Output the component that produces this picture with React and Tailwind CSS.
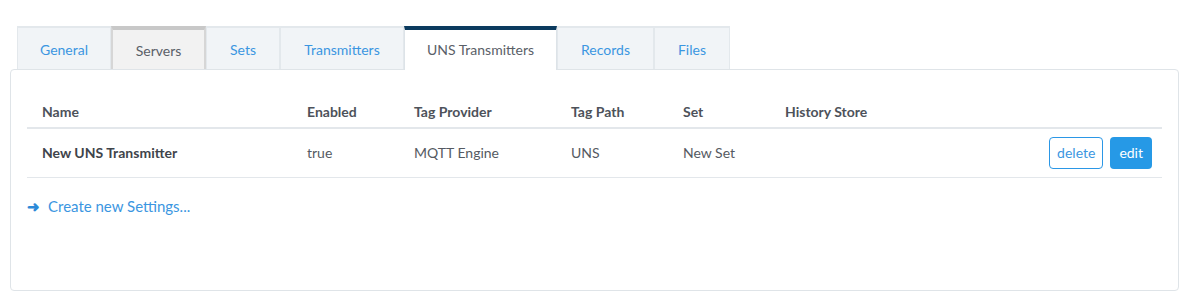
import React from "react";

const tabs = [
  { label: "General", w: "w-[94px]" },
  { label: "Servers", w: "w-[95px]", kind: "hover" },
  { label: "Sets", w: "w-[74px]" },
  { label: "Transmitters", w: "w-[124px]" },
  { label: "UNS Transmitters", w: "w-[153px]", kind: "active" },
  { label: "Records", w: "w-[97px]" },
  { label: "Files", w: "w-[76px]" },
];

function Tab({ t }) {
  if (t.kind === "active") {
    return (
      <div className={`${t.w} relative z-10 -mb-px h-[44px] pb-[2px] bg-white border-x border-[#dde3e8] border-t-[4px] border-t-[#0b3a5e] flex items-center justify-center text-[#5a6068]`}>
        {t.label}
      </div>
    );
  }
  if (t.kind === "hover") {
    return (
      <div className={`${t.w} h-[43px] pt-[2px] bg-[#f2f2f2] border-x-2 border-[#d6d6d6] border-t-[4px] border-t-[#c8c8c8] flex items-center justify-center text-[#5a6068]`}>
        {t.label}
      </div>
    );
  }
  return (
    <div className={`${t.w} h-[43px] pt-[2px] bg-[#f1f4f7] border-x border-t-2 border-[#e3e8ec] flex items-center justify-center text-[#3b96e1]`}>
      {t.label}
    </div>
  );
}

export default function App() {
  return (
    <div
      className="w-[1202px] h-[302px] bg-white pt-[26px] pl-[10px] text-[14px]"
      style={{ fontFamily: '"Source Sans Pro", Lato, "Open Sans", sans-serif' }}
    >
      <div className="flex pl-[7px] items-end">
        {tabs.map((t) => (
          <Tab key={t.label} t={t} />
        ))}
      </div>
      <div className="w-[1169px] h-[222px] border border-[#dfe4e8] rounded-[4px] px-[16px] pt-[25px]">
        <table className="w-full border-collapse table-fixed">
          <thead>
            <tr className="border-b-2 border-[#e3e7eb] text-left text-[#4d525a] font-bold">
              <th className="h-[33px] pl-[15px] w-[280px] font-bold">Name</th>
              <th className="w-[107px] font-bold">Enabled</th>
              <th className="w-[157px] font-bold">Tag Provider</th>
              <th className="w-[112px] font-bold">Tag Path</th>
              <th className="w-[102px] font-bold">Set</th>
              <th className="font-bold">History Store</th>
              <th className="w-[140px]"></th>
            </tr>
          </thead>
          <tbody>
            <tr className="border-b border-[#e3e7eb] text-[#555a62]">
              <td className="h-[49px] pl-[15px] font-bold text-[#3f444b]">New UNS Transmitter</td>
              <td>true</td>
              <td>MQTT Engine</td>
              <td>UNS</td>
              <td>New Set</td>
              <td></td>
              <td className="pr-[10px]">
                <div className="flex justify-end gap-[7px]">
                  <button className="h-[32px] px-[7px] rounded-[4px] border border-[#2b97e6] text-[#3b96e1] bg-white">
                    delete
                  </button>
                  <button className="h-[32px] px-[9px] rounded-[4px] bg-[#2699e6] text-white">
                    edit
                  </button>
                </div>
              </td>
            </tr>
          </tbody>
        </table>
        <div className="flex items-center mt-[17px] text-[#3b96e1] text-[15px]">
          <span className="w-[21px] text-[#2d8ad8] font-bold">➜</span>
          <span>Create new Settings...</span>
        </div>
      </div>
    </div>
  );
}
